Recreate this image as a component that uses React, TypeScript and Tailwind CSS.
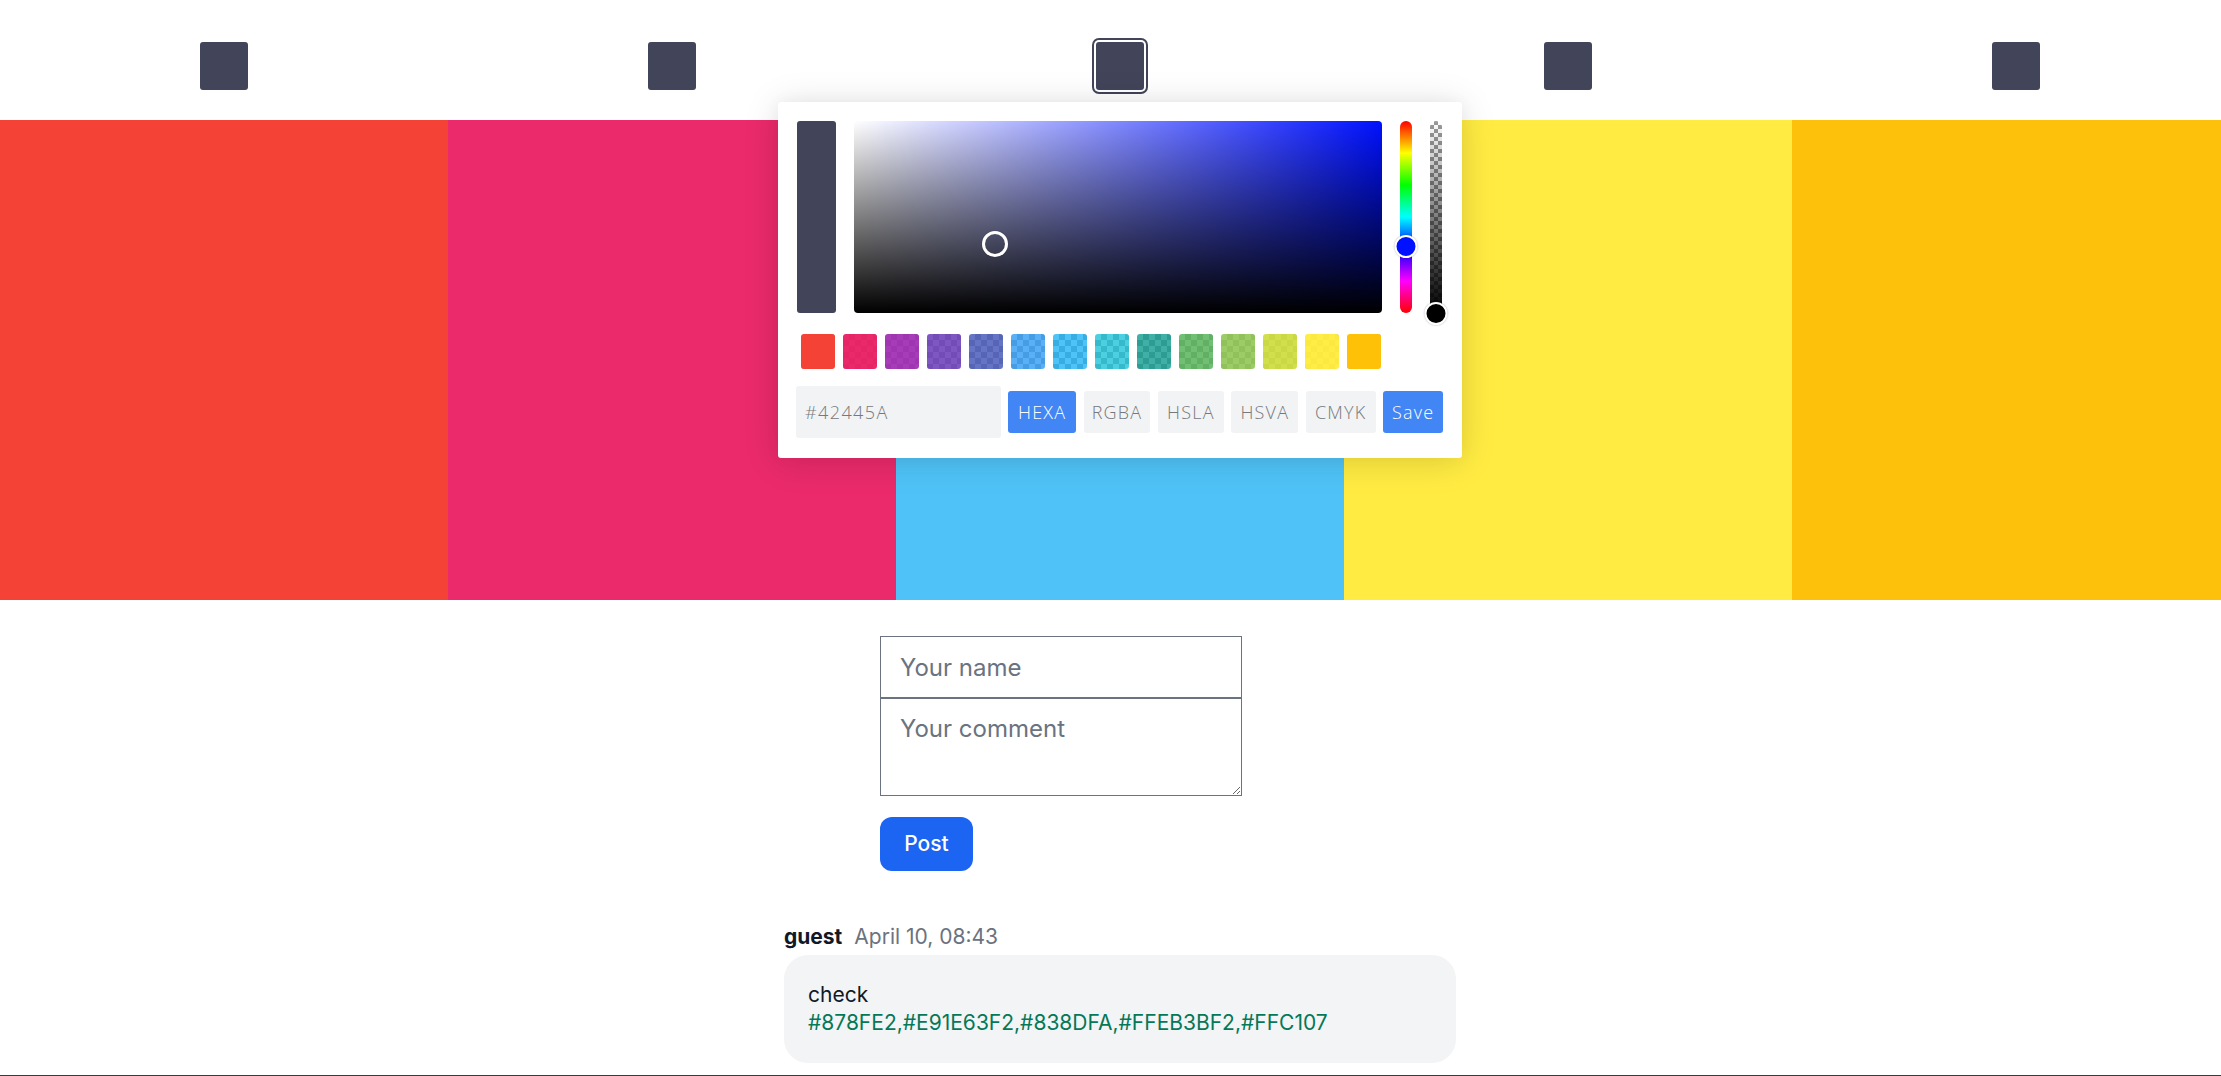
import React from 'react';

const bands = [
  { id: 1, band: 'bg-[#f44336]' },
  { id: 2, band: 'bg-[#ea2a6b]' },
  { id: 3, band: 'bg-[#4fc3f7]' },
  { id: 4, band: 'bg-[#ffeb42]' },
  { id: 5, band: 'bg-[#fdc10c]' },
];

const swatches = [
  'rgba(244, 67, 54, 1)',
  'rgba(233, 30, 99, 0.95)',
  'rgba(156, 39, 176, 0.9)',
  'rgba(103, 58, 183, 0.85)',
  'rgba(63, 81, 181, 0.8)',
  'rgba(33, 150, 243, 0.75)',
  'rgba(3, 169, 244, 0.7)',
  'rgba(0, 188, 212, 0.7)',
  'rgba(0, 150, 136, 0.75)',
  'rgba(76, 175, 80, 0.8)',
  'rgba(139, 195, 74, 0.85)',
  'rgba(205, 220, 57, 0.9)',
  'rgba(255, 235, 59, 0.95)',
  'rgba(255, 193, 7, 1)',
];

const modes = [
  { label: 'HEXA', active: true, w: 'w-[68px]' },
  { label: 'RGBA', active: false, w: 'w-[67px]' },
  { label: 'HSLA', active: false, w: 'w-[66px]' },
  { label: 'HSVA', active: false, w: 'w-[67px]' },
  { label: 'CMYK', active: false, w: 'w-[70px]' },
];

const ColorPopup = () => {
  return (
    <div className="absolute left-[778px] top-[102px] w-[684px] h-[356px] bg-white rounded-[3px] p-[19px] shadow-[0_3px_36px_0_rgba(0,0,0,0.13),0_0_16px_0_rgba(0,0,0,0.04)] font-['Open_Sans',sans-serif] font-light">
      {/* preview + palette + sliders */}
      <div className="flex h-[192px] gap-[18px]">
        <div className="w-[39px] h-full rounded-[3px] bg-[#42445a]" />
        <div className="relative w-[528px] h-full rounded-[4px] bg-[linear-gradient(to_top,#000,transparent),linear-gradient(to_left,#0011ff,#fff)]">
          <div className="absolute left-[128px] top-[110px] w-[26px] h-[26px] rounded-full border-[3px] border-white shadow-[0_0_1px_rgba(0,0,0,0.4)]" />
        </div>
        <div className="relative w-3 h-full rounded-full bg-[linear-gradient(to_bottom,#f00,#ff0,#0f0,#0ff,#00f,#f0f,#f00)]">
          <div className="absolute left-1/2 -translate-x-1/2 top-[114px] w-[23px] h-[23px] rounded-full bg-[#0011ff] border-2 border-white shadow-[0_0_2px_rgba(0,0,0,0.3)]" />
        </div>
        <div className="relative w-3 h-full rounded-full bg-[repeating-conic-gradient(#9a9a9a_0%_25%,#ffffff_0%_50%)] bg-[length:8px_8px]">
          <div className="absolute inset-0 rounded-full bg-[linear-gradient(to_bottom,transparent,#000)]" />
          <div className="absolute left-1/2 -translate-x-1/2 top-[181px] w-[23px] h-[23px] rounded-full bg-black border-2 border-white shadow-[0_0_2px_rgba(0,0,0,0.3)]" />
        </div>
      </div>

      {/* swatches */}
      <div className="mt-[21px] flex gap-2 pl-1">
        {swatches.map((c) => (
          <div key={c} className="relative w-[34px] h-[35px] rounded-[3px] overflow-hidden bg-[repeating-conic-gradient(#b4b4b4_0%_25%,#ffffff_0%_50%)] bg-[length:12px_12px]">
            <span className="absolute inset-0" style={{ backgroundColor: c }} />
          </div>
        ))}
      </div>

      {/* result + modes */}
      <div className="mt-[17px] -ml-px flex items-center gap-[7.5px]">
        <div className="w-[205px] h-[52px] rounded-[3px] bg-[#f1f3f4] flex items-center pl-[9px] text-[18px] tracking-[1.4px] text-[#75797e]">
          #42445A
        </div>
        {modes.map((m) => (
          <div
            key={m.label}
            className={`${m.w} h-[42px] rounded-[3px] flex items-center justify-center text-[18px] tracking-[1.2px] ${
              m.active ? 'bg-[#4285f4] text-white' : 'bg-[#f1f3f4] text-[#75797e]'
            }`}
          >
            {m.label}
          </div>
        ))}
        <div className="w-[60px] h-[42px] rounded-[3px] bg-[#4285f4] text-white flex items-center justify-center text-[18px] tracking-[1.2px]">
          Save
        </div>
      </div>
    </div>
  );
};

export default function App() {
  return (
    <div className="relative w-full h-[1076px] overflow-hidden bg-white border-b border-[#3a3a3a] font-[Inter,sans-serif]">
      {/* palette columns */}
      <div className="flex">
        {bands.map((b) => (
          <div key={b.id} className="w-[448px] shrink-0 flex flex-col">
            <div className="h-[120px] flex justify-center pt-[42px]">
              <button
                className={`w-12 h-12 rounded-[3px] bg-[#42445a] ${
                  b.id === 3 ? 'shadow-[0_0_0_2px_#fff,0_0_0_4px_#42445a]' : ''
                }`}
              />
            </div>
            <div className={`h-[480px] ${b.band}`} />
          </div>
        ))}
      </div>

      <ColorPopup />

      {/* comment area */}
      <div className="ml-[784px] w-[672px]">
        <div className="ml-[96px] w-[362px] pt-[36px]">
          <input
            type="text"
            placeholder="Your name"
            className="block w-full h-[62px] border border-[#6b7280] px-[19px] text-[24px] leading-[36px] placeholder:text-[#6b7280] outline-none"
          />
          <textarea
            rows={2}
            placeholder="Your comment"
            className="block w-full h-[98px] border border-[#6b7280] px-[19px] py-3 text-[24px] leading-[36px] placeholder:text-[#6b7280] outline-none"
          />
          <button className="mt-[21px] w-[93px] h-[54px] rounded-xl bg-[#1c64f2] text-white text-[21px] font-medium">
            Post
          </button>
        </div>

        <div className="mt-[51px] flex items-baseline gap-3 text-[21px] leading-[30px]">
          <span className="font-bold text-[#111827]">guest</span>
          <span className="text-[#6b7280]">April 10, 08:43</span>
        </div>
        <div className="mt-[3px] rounded-3xl bg-[#f3f4f6] px-6 py-[26px] text-[21px] leading-[28px]">
          <div className="text-[#111827]">check</div>
          <div className="text-[#047857]">#878FE2,#E91E63F2,#838DFA,#FFEB3BF2,#FFC107</div>
        </div>
      </div>
    </div>
  );
}
